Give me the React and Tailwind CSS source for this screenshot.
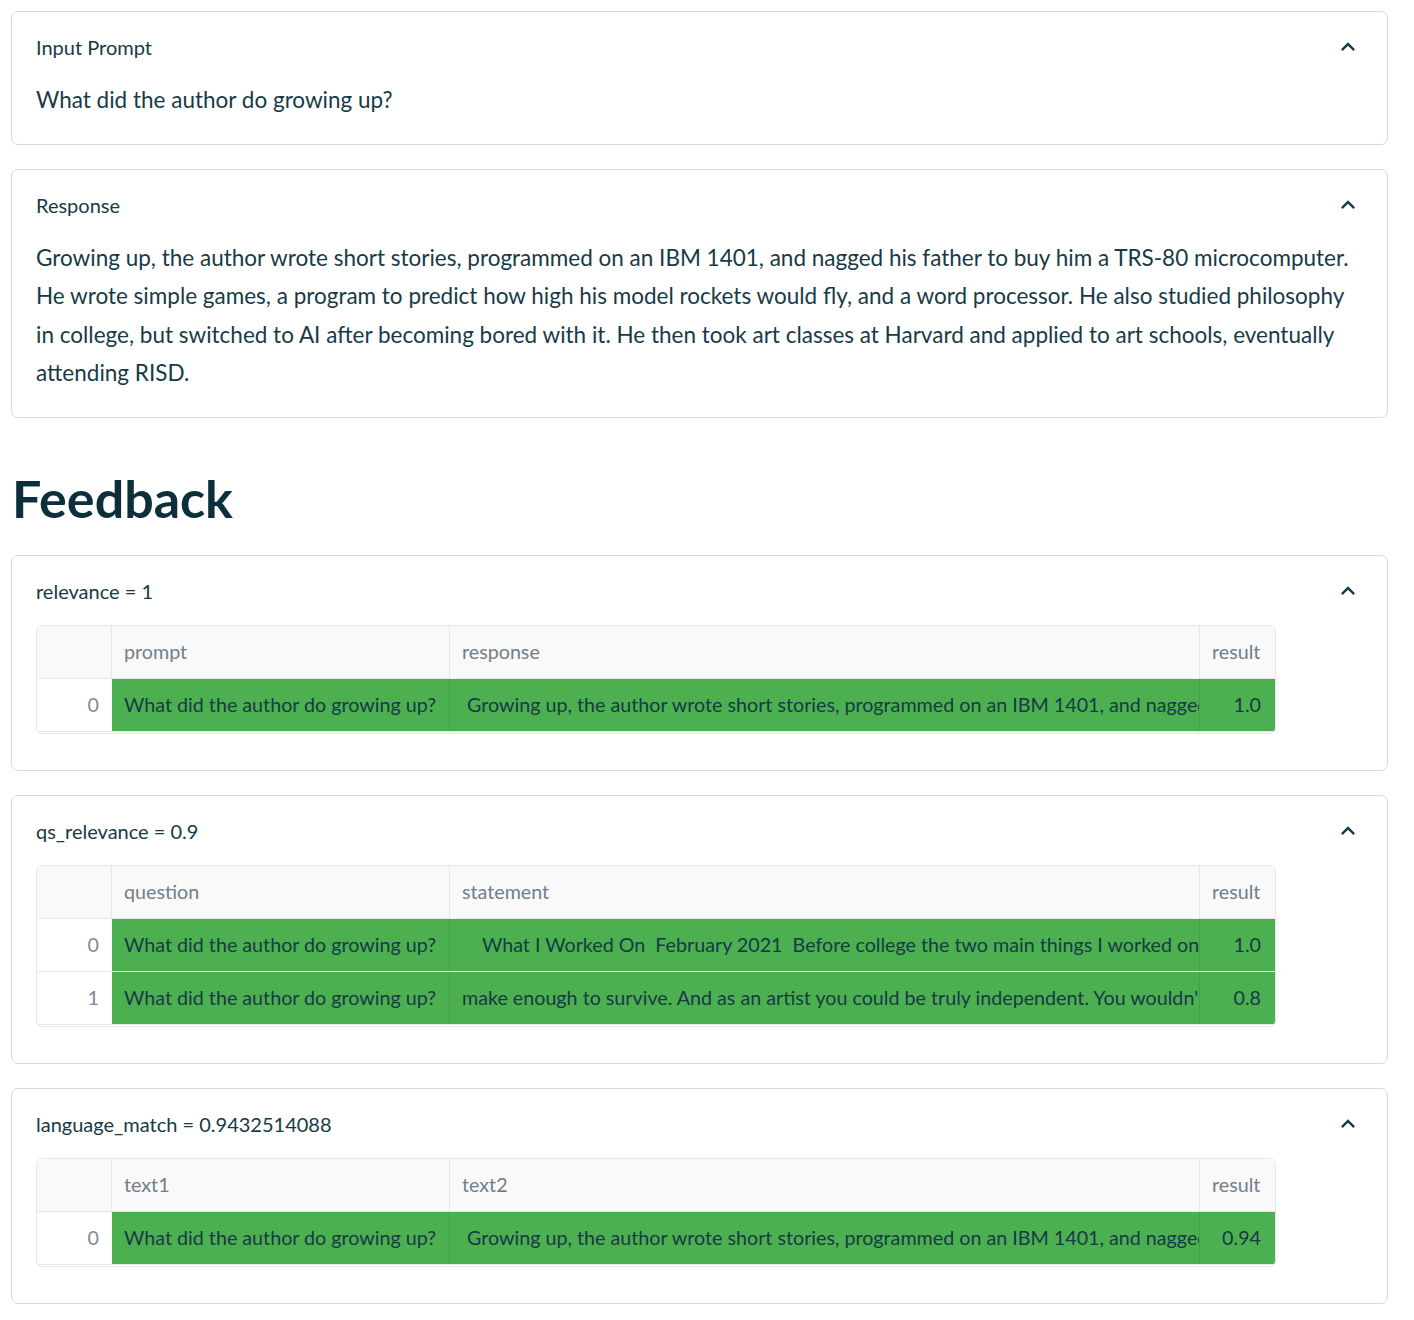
import React from "react";

const TEXT = "text-[#173a47]";

function Chevron() {
  return (
    <svg width="28" height="28" viewBox="0 0 24 24" className="text-[#173a47]">
      <path fill="currentColor" d="M12 8l-6 6 1.41 1.41L12 10.83l4.59 4.58L18 14z" />
    </svg>
  );
}

function Expander({ label, children, table }) {
  return (
    <div className="border border-[#d6dade] rounded-[7px] bg-white">
      <div className="h-[69px] flex items-center justify-between pl-6 pr-[25px]">
        <span className={`text-[20px] ${TEXT}`}>{label}</span>
        <Chevron />
      </div>
      <div className={table ? "px-6 pb-[36px]" : "px-6 pb-[25px]"}>{children}</div>
    </div>
  );
}

function DataTable({ columns, rows }) {
  return (
    <div className="w-[1240px] border border-[#e4e7ea] rounded-[6px] overflow-hidden text-[19.7px]">
      <div className="flex h-[53px] bg-[#f9f9f9] border-b border-[#e4e7ea] text-[#6f7f8b]">
        <div className="w-[75px] border-r border-[#e4e7ea]" />
        <div className="w-[338px] flex items-center px-3 border-r border-[#e4e7ea]">{columns[0]}</div>
        <div className="w-[750px] flex items-center px-3 border-r border-[#e4e7ea]">{columns[1]}</div>
        <div className="w-[75px] flex items-center px-3">{columns[2]}</div>
      </div>
      {rows.map((r, i) => (
        <div key={i} className="flex h-[53px] border-b border-[#e4e7ea]">
          <div className="w-[75px] flex items-center justify-end pr-[13px] text-[#7d8b96] bg-white">{i}</div>
          <div className={`w-[338px] flex items-center px-3 bg-[#4caf50] border-r border-[#45a049] ${TEXT} whitespace-nowrap overflow-hidden`}>
            {r[0]}
          </div>
          <div className={`w-[750px] flex items-center px-3 bg-[#4caf50] border-r border-[#45a049] ${TEXT} whitespace-pre overflow-hidden`}>
            {r[1]}
          </div>
          <div className={`w-[75px] flex items-center justify-end pr-[14px] bg-[#4caf50] ${TEXT}`}>{r[2]}</div>
        </div>
      ))}
      <div className="h-[1px]" />
    </div>
  );
}

const question = "What did the author do growing up?";
const response =
  " Growing up, the author wrote short stories, programmed on an IBM 1401, and nagged his father to buy him a TRS-80 microcomputer.";

export default function App() {
  return (
    <div className="w-[1414px] min-h-[1320px] bg-white pt-[11px] pl-[11px] font-['Lato',sans-serif]">
      <div className="w-[1377px] flex flex-col">
        <Expander label="Input Prompt">
          <p className={`text-[22.5px] leading-[38px] ${TEXT}`}>{question}</p>
        </Expander>

        <div className="mt-[24px]">
          <Expander label="Response">
            <p className={`text-[22.5px] leading-[38.25px] ${TEXT}`}>
              Growing up, the author wrote short stories, programmed on an IBM 1401, and nagged his father to buy him a TRS-80 microcomputer.
              <br />
              He wrote simple games, a program to predict how high his model rockets would fly, and a word processor. He also studied philosophy
              <br />
              in college, but switched to AI after becoming bored with it. He then took art classes at Harvard and applied to art schools, eventually
              <br />
              attending RISD.
            </p>
          </Expander>
        </div>

        <h1 className="mt-[50px] mb-[27px] pl-px h-[60px] leading-[60px] text-[52px] font-bold text-[#0d2f3b]">Feedback</h1>

        <Expander label="relevance = 1" table>
          <DataTable columns={["prompt", "response", "result"]} rows={[[question, response, "1.0"]]} />
        </Expander>

        <div className="mt-[24px]">
          <Expander label="qs_relevance = 0.9" table>
            <DataTable
              columns={["question", "statement", "result"]}
              rows={[
                [question, "    What I Worked On  February 2021  Before college the two main things I worked on, outside of school, were writing and programming.", "1.0"],
                [question, "make enough to survive. And as an artist you could be truly independent. You wouldn't have a boss, or even need to get research funding.", "0.8"],
              ]}
            />
          </Expander>
        </div>

        <div className="mt-[24px]">
          <Expander label="language_match = 0.9432514088" table>
            <DataTable columns={["text1", "text2", "result"]} rows={[[question, response, "0.94"]]} />
          </Expander>
        </div>
      </div>
    </div>
  );
}
